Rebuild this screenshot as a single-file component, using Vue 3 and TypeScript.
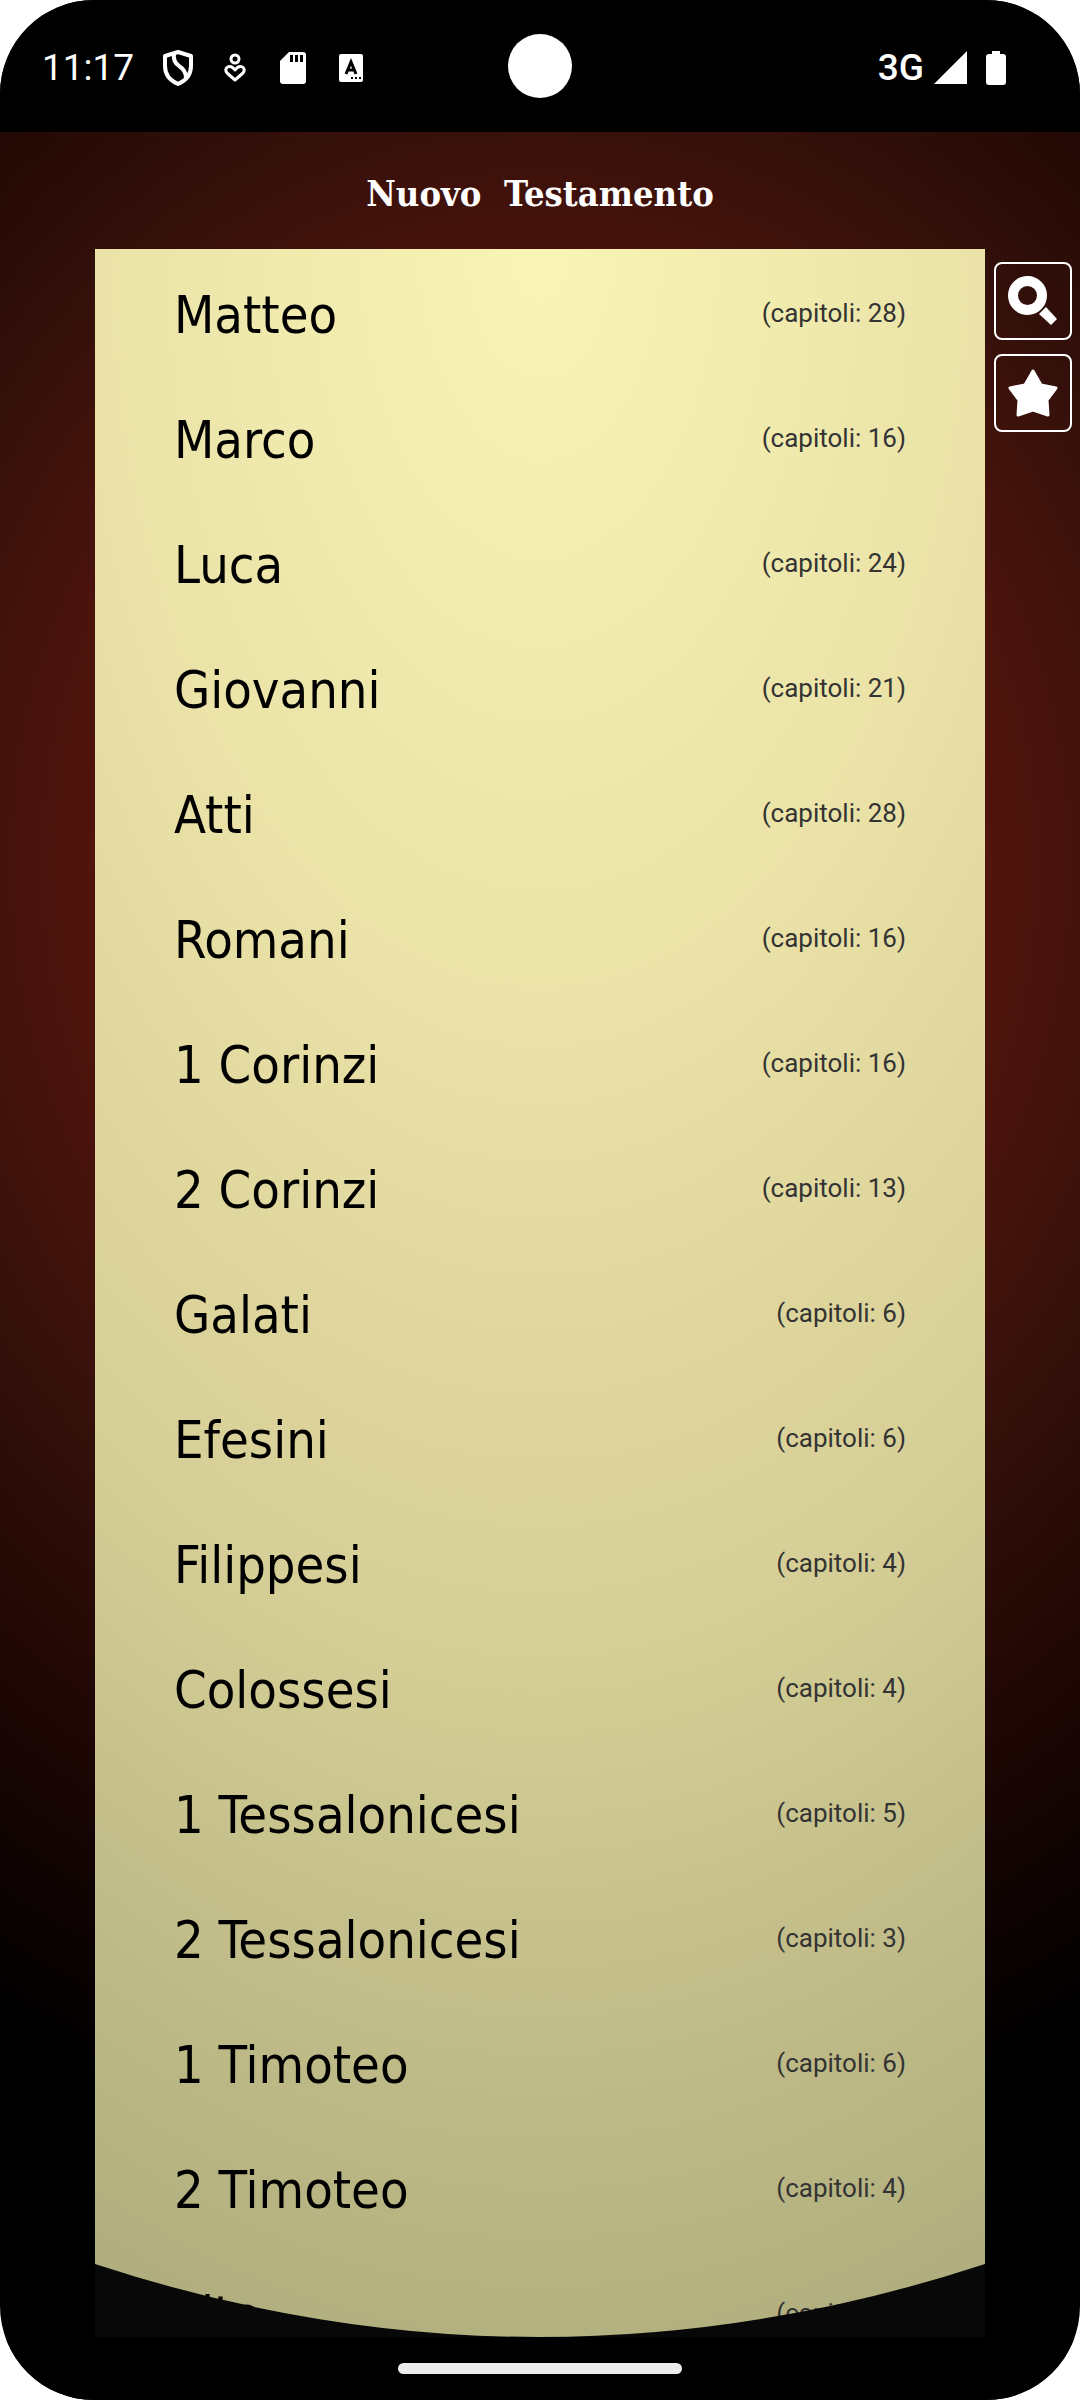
<script setup lang="ts">
interface Book {
  name: string
  chapters: number
}

// Two spaces keep the words of the heading clearly apart.
const title = 'Nuovo  Testamento'

const books: Book[] = [
  { name: 'Matteo', chapters: 28 },
  { name: 'Marco', chapters: 16 },
  { name: 'Luca', chapters: 24 },
  { name: 'Giovanni', chapters: 21 },
  { name: 'Atti', chapters: 28 },
  { name: 'Romani', chapters: 16 },
  { name: '1 Corinzi', chapters: 16 },
  { name: '2 Corinzi', chapters: 13 },
  { name: 'Galati', chapters: 6 },
  { name: 'Efesini', chapters: 6 },
  { name: 'Filippesi', chapters: 4 },
  { name: 'Colossesi', chapters: 4 },
  { name: '1 Tessalonicesi', chapters: 5 },
  { name: '2 Tessalonicesi', chapters: 3 },
  { name: '1 Timoteo', chapters: 6 },
  { name: '2 Timoteo', chapters: 4 },
  { name: 'Tito', chapters: 3 },
]
</script>

<template>
  <div class="device">
    <header class="status">
      <div class="status-side">
        <span class="clock">11:17</span>
        <svg class="ic-shield" viewBox="0 0 32 38" width="32" height="38" fill="none" stroke="#fff" stroke-width="4" stroke-linejoin="round">
          <path d="M16 3 L29 7 V17 C29 26 23 32 16 35 C9 32 3 26 3 17 V7 Z" />
          <path d="M12 5 C11 11 13 14 17 17 C22 20 24 23 24 29" />
        </svg>
        <svg class="ic-person" viewBox="0 0 22 30" width="22" height="30" fill="none" stroke="#fff" stroke-width="3">
          <circle cx="11" cy="6" r="4" />
          <path d="M11 27 L3 20 C-1 15 6 10 11 17 C16 10 23 15 19 20 Z" stroke-linejoin="round" />
        </svg>
        <svg class="ic-card" viewBox="0 0 26 32" width="26" height="32">
          <path fill="#fff" d="M9 0 H23 Q26 0 26 3 V29 Q26 32 23 32 H3 Q0 32 0 29 V9 Z" />
          <path fill="#000" d="M10 3h3v7h-3z M15 3h3v7h-3z M20 3h3v7h-3z" />
        </svg>
        <svg class="ic-input" viewBox="0 0 24 28" width="24" height="28">
          <rect width="24" height="28" rx="2" fill="#fff" />
          <path d="M7 20 L12 8 L17 20 M9 16 H15" fill="none" stroke="#000" stroke-width="3" />
          <path fill="#000" d="M12 23h2v2h-2z M16 23h2v2h-2z M20 23h2v2h-2z" />
        </svg>
      </div>
      <span class="camera"></span>
      <div class="status-side status-end">
        <span class="network">3G</span>
        <svg viewBox="0 0 33 33" width="33" height="33"><path d="M33 0 V33 H0 Z" fill="#fff" /></svg>
        <svg class="ic-battery" viewBox="0 0 20 34" width="20" height="34">
          <path fill="#fff" d="M6 0 H14 V3 H17 Q20 3 20 6 V31 Q20 34 17 34 H3 Q0 34 0 31 V6 Q0 3 3 3 H6 Z" />
        </svg>
      </div>
    </header>

    <main class="app">
      <h1 class="title">{{ title }}</h1>
      <div class="body">
        <section class="paper">
          <ul class="books">
            <li v-for="book in books" :key="book.name">
              <a class="book" href="#">
                <span class="name">{{ book.name }}</span>
                <span class="chapters">(capitoli: {{ book.chapters }})</span>
              </a>
            </li>
          </ul>
          <svg class="curl" viewBox="0 0 890 73" preserveAspectRatio="none" aria-hidden="true">
            <path d="M0 0 Q222 73 445 73 Q668 73 890 0 V73 H0 Z" fill="#080808" />
          </svg>
        </section>
        <nav class="tools">
          <button type="button" class="tool" aria-label="Cerca">
            <svg viewBox="0 0 78 78" width="78" height="78">
              <circle cx="33.5" cy="33.5" r="14.5" fill="none" stroke="#fff" stroke-width="10" />
              <path d="M52 45 L63 57 L57 63 L45 52 Z" fill="#fff" />
            </svg>
          </button>
          <button type="button" class="tool" aria-label="Preferiti">
            <svg viewBox="0 0 78 78" width="78" height="78">
              <path d="M39 17 L47 31 L62 34 L53 46 L54 61 L39 56 L24 61 L25 46 L16 34 L31 31 Z" fill="#fff" stroke="#fff" stroke-width="3" stroke-linejoin="round" />
            </svg>
          </button>
        </nav>
      </div>
    </main>
    <footer class="gesture"><span class="handle"></span></footer>
  </div>
</template>

<style>
body {
  margin: 0;
  background: #fff;
}
</style>

<style scoped>
.device {
  display: flex;
  flex-direction: column;
  min-height: 100vh;
  overflow: hidden;
  border-radius: 94px;
  background: #000 radial-gradient(ellipse 100% 52% at 50% 36%, #5e1a12 0%, #50150d 41%, #46120c 50%, #34100a 62%, #1d0603 82%, #000 105%);
  font-family: Roboto, sans-serif;
}
.status {
  display: grid;
  grid-template-columns: 1fr auto 1fr;
  align-items: center;
  height: 132px;
  padding: 0 42px;
  box-sizing: border-box;
  background: #000;
  color: #fff;
}
.status-side {
  display: flex;
  align-items: center;
  padding-top: 3px;
}
.clock {
  margin-right: 28px;
  font-size: 37px;
  line-height: 48px;
}
.ic-shield { margin-right: 30px; }
.ic-person { margin-right: 34px; }
.ic-card { margin-right: 33px; }
.camera {
  width: 64px;
  height: 64px;
  border-radius: 50%;
  background: #fff;
}
.status-end {
  justify-content: flex-end;
  padding-right: 32px;
}
.network {
  margin-right: 10px;
  font-size: 37px;
  font-weight: 500;
  line-height: 48px;
}
.ic-battery { margin-left: 19px; }
.app {
  flex: 1;
  display: flex;
  flex-direction: column;
}
.title {
  margin: 0;
  padding-top: 5px;
  color: #fff;
  font-family: 'DejaVu Serif Condensed', 'DejaVu Serif', serif;
  font-size: 36px;
  font-weight: 700;
  line-height: 112px;
  text-align: center;
  white-space: pre;
}
.body {
  flex: 1;
  display: grid;
  grid-template-columns: 95px 1fr 95px;
}
.paper {
  grid-column: 2;
  position: relative;
  height: 2088px;
  overflow: hidden;
  background: radial-gradient(ellipse 170% 125% at 50% 0%, #f8f5b6 0%, #ebe3a8 28%, #e0d79e 42%, #d5ce96 54%, #c3be8a 67%, #b3b180 80%, #a8a67a 88%);
}
.books {
  margin: 0;
  padding: 3px 79px 0;
  list-style: none;
}
.book {
  display: flex;
  align-items: center;
  justify-content: space-between;
  height: 125px;
  color: #000;
  text-decoration: none;
}
.name {
  font-family: 'DejaVu Sans Condensed', 'DejaVu Sans', sans-serif;
  font-size: 52px;
  line-height: 64px;
}
.chapters {
  padding-bottom: 4px;
  color: #333;
  font-size: 26px;
  line-height: 32px;
}
.curl {
  position: absolute;
  left: 0;
  bottom: 0;
  width: 100%;
  height: 73px;
}
.tools {
  display: flex;
  flex-direction: column;
  align-items: center;
  gap: 14px;
  padding-top: 13px;
}
.tool {
  box-sizing: border-box;
  display: flex;
  align-items: center;
  justify-content: center;
  width: 78px;
  height: 78px;
  padding: 0;
  border: 2px solid #fff;
  border-radius: 8px;
  background: transparent;
}
.tool svg { flex-shrink: 0; }
.gesture {
  display: flex;
  justify-content: center;
  align-items: center;
  height: 63px;
  background: #000;
}
.handle {
  width: 284px;
  height: 11px;
  border-radius: 6px;
  background: #ececec;
}
</style>
